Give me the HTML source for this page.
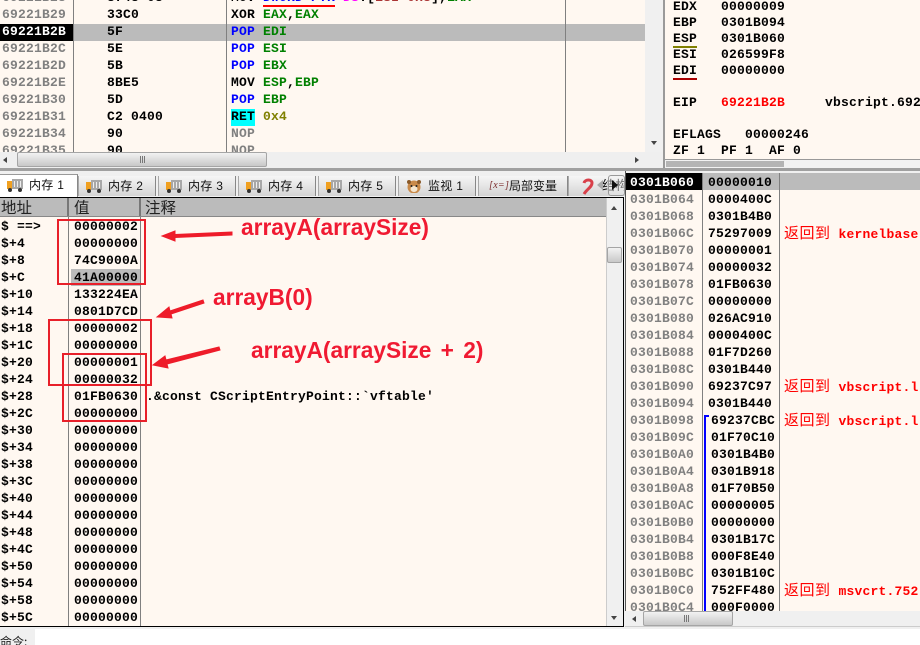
<!DOCTYPE html>
<html><head><meta charset="utf-8"><style>
html,body{margin:0;padding:0;width:920px;height:645px;overflow:hidden;background:#fff}
#r{position:relative;width:920px;height:645px;overflow:hidden;background:#f0f0f0}
#r div,#r pre,#r svg{position:absolute}
pre{margin:0;font:bold 13px/17px "Liberation Mono","DejaVu Sans Mono",monospace;letter-spacing:.2px;color:#000}
.p{background:#fff8f1;overflow:hidden}
.g{color:#808080}.b{color:#0000ff}.n{color:#008000}.o{color:#808000}
.cj{font-family:"Liberation Sans","Noto Sans CJK SC",sans-serif;font-weight:400}
.l{background:#808080;width:1px}
.tab{top:176px;height:20px;width:76px;background:linear-gradient(#f6f6f6,#d4d4d4);border-left:1px solid #aaa;border-right:1px solid #888;font:12px/20px "Liberation Sans","Noto Sans CJK SC",sans-serif;color:#111;white-space:pre;letter-spacing:.3px}
.tab span{position:absolute;left:29px;top:0}
.tk{position:absolute;left:7px;top:3px;width:16px;height:14px;position:absolute}
.sb{background:linear-gradient(#f2f2f2,#c8c8c8);border:1px solid #a5a5a5;border-radius:2px;box-sizing:border-box}
.a{font:bold 22.7px/26px "Liberation Sans",sans-serif;color:#f01a32;white-space:pre}
.rt{border:2px solid #e8202a;box-sizing:border-box}
.rd{color:#ff0000}
</style></head><body><div id="r">

<div class="p" style="left:0;top:0;width:645px;height:152px"></div>
<div style="left:0;top:24px;width:645px;height:17px;background:#bbb"></div>
<div style="left:0;top:24px;width:73px;height:17px;background:#000"></div>
<pre class="g" style="left:2px;top:-11px">69221B28
69221B29
<span style="color:#fff">69221B2B</span>
69221B2C
69221B2D
69221B2E
69221B30
69221B31
69221B34
69221B35</pre>
<pre style="left:107px;top:-11px">8748 08
33C0
5F
5E
5B
8BE5
5D
C2 0400
90
90</pre>
<div style="left:231px;top:109px;width:24px;height:17px;background:#00ffff"></div>
<pre style="left:231px;top:-11px">MOV <span class="b">DWORD PTR</span> <span style="color:#f0f">DS</span>:[<span style="color:#a33">ESI+0x8</span>],<span class="n">EAX</span>
XOR <span class="n">EAX</span>,<span class="n">EAX</span>
<span class="b">POP</span> <span class="n">EDI</span>
<span class="b">POP</span> <span class="n">ESI</span>
<span class="b">POP</span> <span class="n">EBX</span>
MOV <span class="n">ESP</span>,<span class="n">EBP</span>
<span class="b">POP</span> <span class="n">EBP</span>
RET <span class="o">0x4</span>
<span class="g">NOP</span>
<span class="g">NOP</span></pre>
<div style="left:263px;top:5px;width:72px;height:2px;background:#f00"></div>
<div class="l" style="left:73px;top:0;height:152px"></div>
<div class="l" style="left:226px;top:0;height:152px"></div>
<div class="l" style="left:565px;top:0;height:152px"></div>
<div style="left:0;top:152px;width:663px;height:16px;background:#efefef"></div>
<div class="sb" style="left:17px;top:152px;width:250px;height:15px"></div>
<div style="left:140px;top:156px;width:6px;height:7px;background:repeating-linear-gradient(90deg,#777 0 1px,transparent 1px 2px)"></div>
<div style="left:3px;top:157px;border:3px solid transparent;border-right:4px solid #444;border-left:0"></div>
<div style="left:635px;top:157px;border:3px solid transparent;border-left:4px solid #444;border-right:0"></div>
<div style="left:646px;top:0;width:17px;height:152px;background:#f0f0f0"></div>
<div style="left:651px;top:141px;border:3px solid transparent;border-top:4px solid #444;border-bottom:0"></div>
<div style="left:663px;top:0;width:2px;height:168px;background:#9a9a9a"></div>

<div class="p" style="left:665px;top:0;width:255px;height:159px"></div>
<pre style="left:673px;top:-1px;line-height:16px">EDX   00000009
EBP   0301B094
ESP   0301B060
ESI   026599F8
EDI   00000000

EIP   <span class="rd">69221B2B</span>     vbscript.692

EFLAGS   00000246
ZF 1  PF 1  AF 0</pre>
<div style="left:673px;top:46px;width:24px;height:2px;background:#808000"></div>
<div style="left:673px;top:78px;width:24px;height:2px;background:#a00"></div>
<div style="left:665px;top:159px;width:255px;height:9px;background:#f2f2f2;border-top:1px solid #999;box-sizing:border-box"></div>
<div style="left:666px;top:161px;width:118px;height:6px;background:#b4b4b4"></div>
<div style="left:0;top:168px;width:920px;height:3px;background:#a0a0a0"></div>

<div style="left:0;top:171px;width:625px;height:26px;background:#f0f0f0"></div>
<div class="tab" style="left:0;top:174px;height:23px;background:#fff;border-left:0;border-top:1px solid #999;box-sizing:border-box;width:78px"><svg class="tk" viewBox="0 0 16 14"><rect x="0" y="3" width="5" height="8" fill="#f0a020"/><rect x="5" y="1" width="11" height="10" fill="#a8a8a8"/><rect x="7" y="3" width="1" height="6" fill="#eee"/><rect x="10" y="3" width="1" height="6" fill="#eee"/><rect x="13" y="3" width="1" height="6" fill="#eee"/><circle cx="3" cy="12" r="2" fill="#333"/><circle cx="13" cy="12" r="2" fill="#333"/></svg><span>内存 1</span></div>
<div class="tab" style="left:78px"><svg class="tk" viewBox="0 0 16 14"><rect x="0" y="3" width="5" height="8" fill="#f0a020"/><rect x="5" y="1" width="11" height="10" fill="#a8a8a8"/><rect x="7" y="3" width="1" height="6" fill="#eee"/><rect x="10" y="3" width="1" height="6" fill="#eee"/><rect x="13" y="3" width="1" height="6" fill="#eee"/><circle cx="3" cy="12" r="2" fill="#333"/><circle cx="13" cy="12" r="2" fill="#333"/></svg><span>内存 2</span></div>
<div class="tab" style="left:158px"><svg class="tk" viewBox="0 0 16 14"><rect x="0" y="3" width="5" height="8" fill="#f0a020"/><rect x="5" y="1" width="11" height="10" fill="#a8a8a8"/><rect x="7" y="3" width="1" height="6" fill="#eee"/><rect x="10" y="3" width="1" height="6" fill="#eee"/><rect x="13" y="3" width="1" height="6" fill="#eee"/><circle cx="3" cy="12" r="2" fill="#333"/><circle cx="13" cy="12" r="2" fill="#333"/></svg><span>内存 3</span></div>
<div class="tab" style="left:238px"><svg class="tk" viewBox="0 0 16 14"><rect x="0" y="3" width="5" height="8" fill="#f0a020"/><rect x="5" y="1" width="11" height="10" fill="#a8a8a8"/><rect x="7" y="3" width="1" height="6" fill="#eee"/><rect x="10" y="3" width="1" height="6" fill="#eee"/><rect x="13" y="3" width="1" height="6" fill="#eee"/><circle cx="3" cy="12" r="2" fill="#333"/><circle cx="13" cy="12" r="2" fill="#333"/></svg><span>内存 4</span></div>
<div class="tab" style="left:318px"><svg class="tk" viewBox="0 0 16 14"><rect x="0" y="3" width="5" height="8" fill="#f0a020"/><rect x="5" y="1" width="11" height="10" fill="#a8a8a8"/><rect x="7" y="3" width="1" height="6" fill="#eee"/><rect x="10" y="3" width="1" height="6" fill="#eee"/><rect x="13" y="3" width="1" height="6" fill="#eee"/><circle cx="3" cy="12" r="2" fill="#333"/><circle cx="13" cy="12" r="2" fill="#333"/></svg><span>内存 5</span></div>
<div class="tab" style="left:398px"><svg class="tk" viewBox="0 0 16 14"><circle cx="8" cy="8" r="6.5" fill="#c98a4a"/><circle cx="3" cy="3" r="2" fill="#8a5a2a"/><circle cx="13" cy="3" r="2" fill="#8a5a2a"/><ellipse cx="8" cy="10" rx="3.5" ry="3" fill="#f4e6d0"/><circle cx="5.500" cy="7" r="1" fill="#222"/><circle cx="10.500" cy="7" r="1" fill="#222"/></svg><span>监视 1</span></div>
<div class="tab" style="left:478px;width:88px"><span style="left:10px;font:italic 10px/20px 'Liberation Serif',serif;color:#7a2a2a">[x=]</span><span style="left:30px;letter-spacing:0;font-size:12px">局部变量</span></div>
<div class="tab" style="left:568px;width:56px;overflow:hidden"><svg style="left:12px;top:2px" width="14" height="17" viewBox="0 0 14 17"><path d="M3 5C4 1 11 1 11 5C11 9 6 11 3 16" fill="none" stroke="#d8404a" stroke-width="3"/></svg><span style="left:33px;font-size:13px">结构</span></div>
<div style="left:597px;top:180px;border:5px solid transparent;border-right:6px solid #aaa;border-left:0"></div>
<div style="left:608px;top:175px;width:15px;height:19px;border:1px solid #999;border-radius:3px;background:rgba(240,240,240,.4)"></div>
<div style="left:612px;top:180px;border:5px solid transparent;border-left:6px solid #111;border-right:0"></div>

<div style="left:0;top:197px;width:624px;height:1px;background:#000"></div>
<div class="p" style="left:0;top:198px;width:606px;height:429px"></div>
<div style="left:0;top:198px;width:606px;height:18px;background:#bbb;border-bottom:1px solid #888"></div>
<div style="left:67px;top:198px;width:2px;height:18px;background:#777"></div>
<div style="left:139px;top:198px;width:2px;height:18px;background:#777"></div>
<div class="cj" style="left:1px;top:198px;font:15.5px/18px 'Noto Sans CJK SC',sans-serif;color:#222">地址</div>
<div style="left:74px;top:198px;font:15.5px/18px 'Noto Sans CJK SC',sans-serif;color:#222">值</div>
<div style="left:145px;top:198px;font:15.5px/18px 'Noto Sans CJK SC',sans-serif;color:#222">注释</div>
<div style="left:71px;top:269px;width:69px;height:17px;background:#bbb"></div>
<pre style="left:1px;top:218px">$ ==&gt;
$+4
$+8
$+C
$+10
$+14
$+18
$+1C
$+20
$+24
$+28
$+2C
$+30
$+34
$+38
$+3C
$+40
$+44
$+48
$+4C
$+50
$+54
$+58
$+5C</pre>
<pre style="left:74px;top:218px">00000002
00000000
74C9000A
41A00000
133224EA
0801D7CD
00000002
00000000
00000001
00000032
01FB0630
00000000
00000000
00000000
00000000
00000000
00000000
00000000
00000000
00000000
00000000
00000000
00000000
00000000</pre>
<pre style="left:146px;top:388px">.&amp;const CScriptEntryPoint::`vftable'</pre>
<div class="l" style="left:68px;top:217px;height:410px"></div>
<div class="l" style="left:140px;top:217px;height:410px"></div>
<div style="left:606px;top:198px;width:17px;height:429px;background:#f0f0f0;border-left:1px solid #ccc;box-sizing:border-box"></div>
<div style="left:611px;top:206px;border:3px solid transparent;border-bottom:4px solid #444;border-top:0"></div>
<div class="sb" style="left:607px;top:247px;width:15px;height:16px"></div>
<div style="left:611px;top:616px;border:3px solid transparent;border-top:4px solid #444;border-bottom:0"></div>
<div style="left:623px;top:197px;width:1px;height:430px;background:#000"></div>
<div style="left:0;top:626px;width:624px;height:1px;background:#000"></div>

<div class="p" style="left:625px;top:174px;width:295px;height:437px"></div>
<div style="left:625px;top:173px;width:295px;height:17px;background:#bbb"></div>
<div style="left:625px;top:173px;width:77px;height:17px;background:#000"></div>
<div style="left:625px;top:171px;width:1px;height:440px;background:#555"></div>
<pre class="g" style="left:630px;top:174px"><span style="color:#fff">0301B060</span>
0301B064
0301B068
0301B06C
0301B070
0301B074
0301B078
0301B07C
0301B080
0301B084
0301B088
0301B08C
0301B090
0301B094
0301B098
0301B09C
0301B0A0
0301B0A4
0301B0A8
0301B0AC
0301B0B0
0301B0B4
0301B0B8
0301B0BC
0301B0C0
0301B0C4</pre>
<pre style="left:708px;top:174px">00000010
0000400C
0301B4B0
75297009
00000001
00000032
01FB0630
00000000
026AC910
0000400C
01F7D260
0301B440
69237C97
0301B440</pre>
<pre style="left:711px;top:412px">69237CBC
01F70C10
0301B4B0
0301B918
01F70B50
00000005
00000000
0301B17C
000F8E40
0301B10C
752FF480
000F0000</pre>
<div style="left:704px;top:415px;width:2px;height:196px;background:#0000ff"></div>
<div style="left:704px;top:415px;width:5px;height:2px;background:#0000ff"></div>
<div class="l" style="left:702px;top:173px;height:438px"></div>
<div class="l" style="left:779px;top:173px;height:438px"></div>
<pre class="rd" style="left:784px;top:225px"><span class="cj" style="font-size:15px;letter-spacing:.5px">返回到</span> kernelbase</pre>
<pre class="rd" style="left:784px;top:378px"><span class="cj" style="font-size:15px;letter-spacing:.5px">返回到</span> vbscript.l</pre>
<pre class="rd" style="left:784px;top:412px"><span class="cj" style="font-size:15px;letter-spacing:.5px">返回到</span> vbscript.l</pre>
<pre class="rd" style="left:784px;top:582px"><span class="cj" style="font-size:15px;letter-spacing:.5px">返回到</span> msvcrt.752</pre>
<div style="left:625px;top:611px;width:295px;height:15px;background:#f0f0f0"></div>
<div class="sb" style="left:643px;top:611px;width:90px;height:15px"></div>
<div style="left:684px;top:615px;width:6px;height:7px;background:repeating-linear-gradient(90deg,#777 0 1px,transparent 1px 2px)"></div>
<div style="left:632px;top:616px;border:3px solid transparent;border-right:4px solid #444;border-left:0"></div>
<div style="left:625px;top:626px;width:295px;height:1px;background:#ccc"></div>

<div style="left:0;top:627px;width:920px;height:18px;background:#f0f0f0"></div>
<div style="left:35px;top:629px;width:885px;height:16px;background:#fff"></div>
<div style="left:0;top:634px;font:12px/16px 'Noto Sans CJK SC',sans-serif;color:#222">命令:</div>

<div class="rt" style="left:57px;top:219px;width:89px;height:66px"></div>
<div class="rt" style="left:48px;top:319px;width:104px;height:67px"></div>
<div class="rt" style="left:62px;top:353px;width:85px;height:69px"></div>
<div class="a" style="left:241px;top:214px">arrayA(arraySize)</div>
<div class="a" style="left:213px;top:284px">arrayB(0)</div>
<div class="a" style="left:251px;top:337px;word-spacing:3px">arrayA(arraySize + 2)</div>
<svg style="left:0;top:0" width="920" height="645" viewBox="0 0 920 645">
<g fill="#ee1c2a" stroke="#ee1c2a" stroke-width="1">
<path d="M232 232L175 234.500L175 231L162 236L175 241L175 237.500L232 235Z"/>
<path d="M203 300L170 311L169 307L157 317L172 318L171 314L204 303Z"/>
<path d="M219 347L166 360L165 356L153 365L168 368L167 364L220 350Z"/>
</g></svg>
</div></body></html>
